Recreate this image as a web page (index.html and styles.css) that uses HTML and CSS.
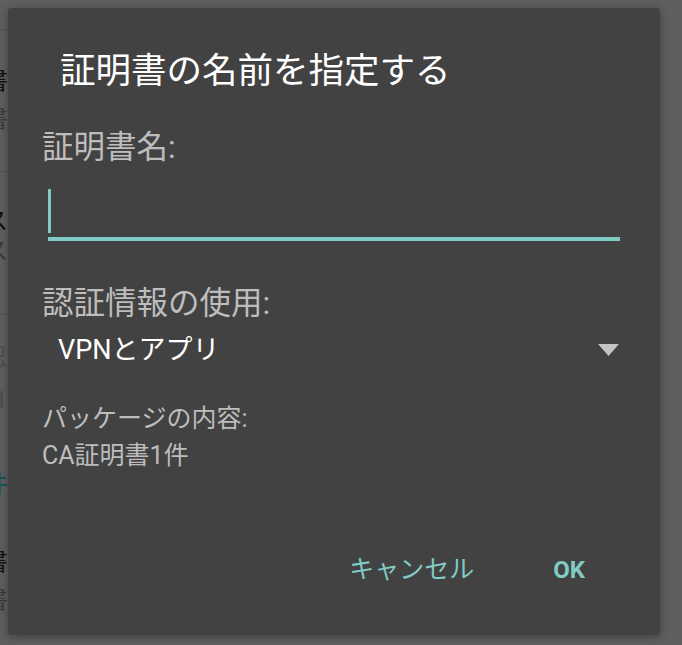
FILE: index.html
```html
<!DOCTYPE html>
<html lang="ja">
<head>
<meta charset="utf-8">
<link rel="stylesheet" href="styles.css">
</head>
<body>
<div class="bg">
  <div class="bg-head"></div>
  <div class="bg-row row1">
    <div class="bg-title off3">証明書</div>
    <div class="bg-sum off3">証明書</div>
  </div>
  <div class="bg-row row2">
    <div class="bg-title off-s">ス</div>
    <div class="bg-sum off-s">ス</div>
  </div>
  <div class="bg-row row3">
    <div class="bg-dis off-n">認</div>
    <div class="bg-dis num off-1">1</div>
    <div class="bg-cat off-k">件</div>
    <div class="bg-title off3 t4">証明書</div>
    <div class="bg-sum off3">証明書</div>
  </div>
</div>

<div class="dialog">
  <div class="title">証明書の名前を指定する</div>
  <div class="label first">証明書名:</div>
  <div class="field"><span class="cursor"></span></div>
  <div class="label second">認証情報の使用:</div>
  <div class="spinner">
    <span class="spinner-text">VPNとアプリ</span>
    <svg class="arrow" width="21" height="12" viewBox="0 0 21 12"><path d="M0 0H21L10.5 12Z" fill="#c4c4c4"/></svg>
  </div>
  <div class="pkg">
    <div>パッケージの内容:</div>
    <div>CA証明書1件</div>
  </div>
  <div class="buttons">
    <span class="btn">キャンセル</span>
    <span class="btn ok">OK</span>
  </div>
</div>
</body>
</html>
```
FILE: styles.css
```css
html, body {
  margin: 0;
  padding: 0;
}
body {
  width: 682px;
  height: 645px;
  background: #5f5f5f;
  font-family: Roboto, "Noto Sans CJK JP", sans-serif;
  overflow: hidden;
  position: relative;
}
.bg {
  width: 300px;
}
.bg-head {
  height: 29px;
  border-bottom: 1px solid #555;
}
.bg-row {
  border-bottom: 1px solid #555;
  font-size: 24px;
  line-height: 30px;
}
.row1 {
  height: 142px;
  padding-top: 36px;
  box-sizing: border-box;
}
.row2 {
  height: 143px;
  padding-top: 34px;
  box-sizing: border-box;
}
.row3 {
  border-bottom: none;
  padding-top: 28px;
}
.bg-title {
  color: #111;
  white-space: nowrap;
}
.bg-sum {
  color: #3b3b3b;
  margin-top: 8px;
  white-space: nowrap;
}
.row2 .bg-sum {
  margin-top: 0;
}
.bg-dis {
  color: #4d4d4d;
  white-space: nowrap;
}
.num {
  margin-top: 12px;
}
.bg-cat {
  color: #0b5a50;
  margin-top: 54px;
  white-space: nowrap;
}
.t4 {
  margin-top: 48px;
}
.off3 { margin-left: -64px; }
.off-s { margin-left: -16px; }
.off-n { margin-left: -18px; }
.off-1 { margin-left: -6px; }
.off-k { margin-left: -16px; }

.dialog {
  position: absolute;
  left: 8px;
  top: 8px;
  width: 652px;
  height: 627px;
  background: #424242;
  border-radius: 3px;
  box-shadow: 0 2px 10px rgba(0, 0, 0, 0.35);
  display: flex;
  flex-direction: column;
}
.title {
  margin: 41px 0 0 52px;
  font-size: 35.5px;
  line-height: 44px;
  color: #ffffff;
}
.label {
  margin-left: 34px;
  font-size: 31.5px;
  line-height: 40px;
  color: #bdbdbd;
}
.label.first {
  margin-top: 35px;
}
.label.second {
  margin-top: 43px;
}
.field {
  margin: 0 40px 0 40px;
  padding: 21px 0 4px 0;
  border-bottom: 4px solid #80cbc4;
  display: flex;
}
.cursor {
  width: 3px;
  height: 44px;
  background: #80cbc4;
}
.spinner {
  margin: 6px 41px 0 50px;
  height: 40px;
  display: flex;
  align-items: center;
  justify-content: space-between;
}
.spinner-text {
  font-size: 27px;
  line-height: 40px;
  color: #ffffff;
}
.arrow {
  display: block;
}
.pkg {
  margin: 30px 0 0 34px;
  font-size: 25px;
  line-height: 37px;
  color: #bdbdbd;
}
.buttons {
  margin-top: auto;
  margin-bottom: 45px;
  padding-right: 75px;
  display: flex;
  justify-content: flex-end;
  gap: 79px;
}
.btn {
  font-size: 25px;
  line-height: 40px;
  color: #80cbc4;
}
.btn.ok {
  font-weight: 700;
  font-size: 24px;
}
```
